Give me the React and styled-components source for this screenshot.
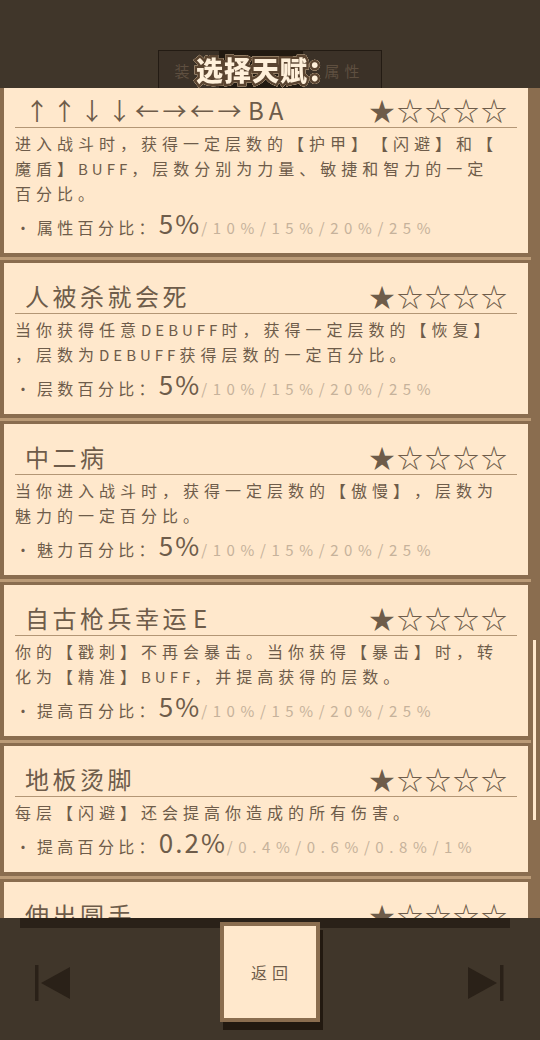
import React from "react";
import styled, { createGlobalStyle } from "styled-components";

const GlobalStyle = createGlobalStyle`
  html, body {
    margin: 0;
    padding: 0;
    background: #40362a;
  }
  body {
    font-family: "Noto Sans CJK SC", "Noto Sans", sans-serif;
    text-spacing-trim: space-all;
  }
`;

const INK = "#6e5c4a";
const CREAM = "#ffe8cc";
const FRAME = "#8a6d4f";

const Screen = styled.div`
  width: 540px;
  height: 1040px;
  display: flex;
  flex-direction: column;
  background: #40362a;
  overflow: hidden;
`;

const Header = styled.header`
  height: 88px;
  flex: none;
  display: flex;
  justify-content: center;
  align-items: flex-end;
`;

const TabBar = styled.nav`
  position: relative;
  display: flex;
  height: 38px;
  box-sizing: border-box;
  border: 1px solid #231b13;
  border-bottom: none;
  background: #3b3127;
`;

const Tab = styled.div`
  width: ${(p) => p.$w}px;
  display: flex;
  align-items: center;
  justify-content: center;
  padding-top: 2px;
  padding-left: ${(p) => p.$shift || 0}px;
  box-sizing: border-box;
  background: ${(p) => (p.$active ? "#221a11" : "transparent")};
  color: #5e4f40;
  font-size: 15px;
  letter-spacing: 5px;
  text-indent: 5px;
`;

const ScreenTitle = styled.h1`
  position: absolute;
  left: 50%;
  top: 50%;
  transform: translate(calc(-50% - 4px), -52%);
  margin: 0;
  white-space: nowrap;
  font-size: 27px;
  font-weight: 900;
  letter-spacing: 1px;
  color: #fff0da;
  -webkit-text-stroke: 5px #5a4430;
  paint-order: stroke fill;
  filter: drop-shadow(0 0 0.6px #e6cfae) drop-shadow(0 0 0.6px #e6cfae);
`;

const Panel = styled.main`
  height: 830px;
  flex: none;
  display: flex;
  background: ${FRAME};
  overflow: hidden;
`;

const CardList = styled.div`
  width: 531px;
  flex: none;
  display: flex;
  flex-direction: column;
  margin-top: -11px;
`;

const Card = styled.section`
  margin-left: 4px;
  width: 524px;
  flex: none;
  box-sizing: border-box;
  padding: 16px 11px 15px;
  background: ${CREAM};
  color: ${INK};
`;

const Divider = styled.div`
  height: 3px;
  flex: none;
  margin: 4px 0 3px;
  background: #bb9b77;
`;

const TitleRow = styled.div`
  height: 34px;
  display: flex;
  align-items: center;
  justify-content: space-between;
  padding: 0 10px;
  border-bottom: 1px solid #b39675;
`;

const TalentName = styled.h2`
  margin: 0;
  font-size: 24px;
  font-weight: 400;
  letter-spacing: 3.5px;
  line-height: 34px;
  white-space: nowrap;
`;

const TitleLatin = styled.span`
  letter-spacing: 5px;
  margin-left: 3px;
`;

const Stars = styled.div`
  font-size: 26px;
  letter-spacing: 2px;
  line-height: 34px;
  white-space: nowrap;
  margin-right: -2px;
`;

const Description = styled.div`
  margin-top: 3px;
  font-size: 16px;
  letter-spacing: 5px;
  line-height: 25px;
`;

const Line = styled.div`
  white-space: nowrap;
`;

const Latin = styled.span`
  font-size: 15px;
  letter-spacing: 4px;
`;

const StatRow = styled.div`
  margin-top: 2px;
  height: 30px;
  display: flex;
  align-items: baseline;
  line-height: 30px;
  white-space: nowrap;
`;

const Bullet = styled.span`
  display: inline-block;
  width: 16px;
  text-align: center;
  font-size: 15px;
`;

const StatLabel = styled.span`
  margin-left: 6px;
  font-size: 16px;
  letter-spacing: 4.3px;
`;

const StatCurrent = styled.span`
  font-size: 26px;
  letter-spacing: 2px;
`;

const StatNext = styled.span`
  font-size: 15px;
  letter-spacing: 5.6px;
  color: #c6b29b;
`;

const ScrollTrack = styled.div`
  flex: 1;
  display: flex;
  justify-content: center;
`;

const ScrollThumb = styled.div`
  width: 3px;
  height: 180px;
  margin-top: 552px;
  margin-left: -2px;
  background: ${CREAM};
`;

const Footer = styled.footer`
  flex: 1;
  display: flex;
  align-items: flex-start;
  justify-content: space-between;
  padding: 4px 36px 0 35px;
  background: linear-gradient(#2a2118, #2a2118) 20px 0 / 490px 10px no-repeat,
    #40362a;
`;

const NavIcon = styled.svg`
  margin-top: 43px;
  flex: none;
`;

const BackButton = styled.button`
  width: 100px;
  height: 100px;
  box-sizing: border-box;
  border: 4px solid ${FRAME};
  background: ${CREAM};
  box-shadow: 3px 8px 0 #221910;
  padding: 0;
  font-family: inherit;
  font-size: 16px;
  letter-spacing: 5px;
  text-indent: 5px;
  color: ${INK};
  cursor: pointer;
`;

const talents = [
  {
    name: "↑↑↓↓←→←→BA",
    lines: [
      "进入战斗时，获得一定层数的【护甲】【闪避】和【",
      "魔盾】BUFF，层数分别为力量、敏捷和智力的一定",
      "百分比。",
    ],
    stat: "属性百分比：",
    values: ["5%", "10%", "15%", "20%", "25%"],
  },
  {
    name: "人被杀就会死",
    lines: [
      "当你获得任意DEBUFF时，获得一定层数的【恢复】",
      "，层数为DEBUFF获得层数的一定百分比。",
    ],
    stat: "层数百分比：",
    values: ["5%", "10%", "15%", "20%", "25%"],
  },
  {
    name: "中二病",
    lines: [
      "当你进入战斗时，获得一定层数的【傲慢】，层数为",
      "魅力的一定百分比。",
    ],
    stat: "魅力百分比：",
    values: ["5%", "10%", "15%", "20%", "25%"],
  },
  {
    name: "自古枪兵幸运E",
    lines: [
      "你的【戳刺】不再会暴击。当你获得【暴击】时，转",
      "化为【精准】BUFF，并提高获得的层数。",
    ],
    stat: "提高百分比：",
    values: ["5%", "10%", "15%", "20%", "25%"],
  },
  {
    name: "地板烫脚",
    lines: ["每层【闪避】还会提高你造成的所有伤害。"],
    stat: "提高百分比：",
    values: ["0.2%", "0.4%", "0.6%", "0.8%", "1%"],
  },
  {
    name: "伸出圆手",
    lines: ["受到攻击时，有一定概率获得【格挡】BUFF。"],
    stat: "触发概率：",
    values: ["5%", "10%", "15%", "20%", "25%"],
  },
];

// Split a string into CJK text and Latin runs, wrapping the runs in `Wrap`.
function withLatin(text, Wrap) {
  return text.split(/([A-Za-z]+)/).map((part, i) =>
    /^[A-Za-z]+$/.test(part) ? <Wrap key={i}>{part}</Wrap> : part
  );
}

function TalentCard({ talent, level = 1 }) {
  const [current, ...rest] = talent.values;
  return (
    <Card>
      <TitleRow>
        <TalentName>{withLatin(talent.name, TitleLatin)}</TalentName>
        <Stars>{"★".repeat(level) + "☆".repeat(5 - level)}</Stars>
      </TitleRow>
      <Description>
        {talent.lines.map((l, i) => (
          <Line key={i}>{withLatin(l, Latin)}</Line>
        ))}
      </Description>
      <StatRow>
        <Bullet>·</Bullet>
        <StatLabel>{talent.stat}</StatLabel>
        <StatCurrent>{current}</StatCurrent>
        <StatNext>{rest.map((v) => "/" + v).join("")}</StatNext>
      </StatRow>
    </Card>
  );
}

function PrevIcon() {
  return (
    <NavIcon width="36" height="36" viewBox="0 0 36 36">
      <rect x="0" y="0" width="3.5" height="36" fill="#2a2118" />
      <polygon points="6,18 35,2 35,34" fill="#2a2118" />
    </NavIcon>
  );
}

function NextIcon() {
  return (
    <NavIcon width="36" height="36" viewBox="0 0 36 36">
      <polygon points="0,2 0,34 29,18" fill="#2a2118" />
      <rect x="32" y="0" width="3.5" height="36" fill="#2a2118" />
    </NavIcon>
  );
}

export default function App() {
  return (
    <>
      <GlobalStyle />
      <Screen>
        <Header>
          <TabBar>
            <Tab $w={60} $shift={6}>装备</Tab>
            <Tab $w={84} $active />
            <Tab $w={78}>属性</Tab>
            <ScreenTitle>选择天赋：</ScreenTitle>
          </TabBar>
        </Header>
        <Panel>
          <CardList>
            {talents.map((t, i) => (
              <React.Fragment key={t.name}>
                {i > 0 && <Divider />}
                <TalentCard talent={t} />
              </React.Fragment>
            ))}
          </CardList>
          <ScrollTrack>
            <ScrollThumb />
          </ScrollTrack>
        </Panel>
        <Footer>
          <PrevIcon />
          <BackButton>返回</BackButton>
          <NextIcon />
        </Footer>
      </Screen>
    </>
  );
}
